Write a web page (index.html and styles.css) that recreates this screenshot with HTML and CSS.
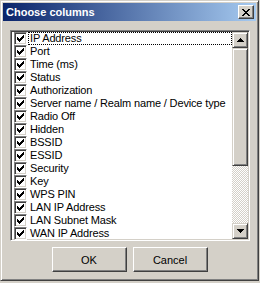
FILE: index.html
```html
<!DOCTYPE html>
<html lang="en">
<head>
  <meta charset="UTF-8" />
  <title>Choose columns</title>
  <link rel="stylesheet" href="styles.css">
</head>
<body>

  <div class="window">
    <div class="titlebar">
      <span class="title">Choose columns</span>
      <button class="close" title="Close">
        <svg width="8" height="7" viewBox="0 0 8 7" shape-rendering="crispEdges">
          <path d="M0 0h2v1h-2zM6 0h2v1h-2zM1 1h2v1h-2zM5 1h2v1h-2zM2 2h4v1h-4zM3 3h2v1h-2zM2 4h4v1h-4zM1 5h2v1h-2zM5 5h2v1h-2zM0 6h2v1h-2zM6 6h2v1h-2z" fill="#000"/>
        </svg>
      </button>
    </div>

    <div class="listbox">
      <ul class="items" id="items"></ul>
      <div class="scrollbar">
        <div class="sb-btn">
          <svg width="7" height="4" viewBox="0 0 7 4" shape-rendering="crispEdges"><path d="M3 0h1v1h-1zM2 1h3v1h-3zM1 2h5v1h-5zM0 3h7v1h-7z" fill="#000"/></svg>
        </div>
        <div class="sb-thumb"></div>
        <div class="sb-track"></div>
        <div class="sb-btn">
          <svg width="7" height="4" viewBox="0 0 7 4" shape-rendering="crispEdges"><path d="M0 0h7v1h-7zM1 1h5v1h-5zM2 2h3v1h-3zM3 3h1v1h-1z" fill="#000"/></svg>
        </div>
      </div>
    </div>

    <div class="buttons">
      <button class="btn">OK</button>
      <button class="btn">Cancel</button>
    </div>
  </div>

  <script>
    const columns = [
      'IP Address', 'Port', 'Time (ms)', 'Status', 'Authorization',
      'Server name / Realm name / Device type', 'Radio Off', 'Hidden',
      'BSSID', 'ESSID', 'Security', 'Key', 'WPS PIN', 'LAN IP Address',
      'LAN Subnet Mask', 'WAN IP Address'
    ];

    const check = '<svg width="7" height="7" viewBox="0 0 7 7" shape-rendering="crispEdges">' +
      '<path d="M6 0h1v3h-1zM5 1h1v3h-1zM0 2h1v3h-1zM4 2h1v3h-1zM1 3h1v3h-1zM3 3h1v3h-1zM2 4h1v3h-1z" fill="#000"/></svg>';

    const list = document.getElementById('items');
    columns.forEach((name, i) => {
      const li = document.createElement('li');
      li.className = 'item';
      li.innerHTML = `<span class="checkbox">${check}</span><span class="label${i === 0 ? ' focus' : ''}">${name}</span>`;
      list.appendChild(li);
    });
  </script>

</body>
</html>
```

FILE: styles.css
```css
body {
  margin: 0;
  background: #d4d0c8;
  font-family: Tahoma, "Liberation Sans", Arial, sans-serif;
  font-size: 11px;
}
.window {
  box-sizing: border-box;
  width: 259px;
  height: 281px;
  padding: 2px;
  border: 1px solid;
  border-color: #d4d0c8 #404040 #404040 #d4d0c8;
  box-shadow: inset 1px 1px #fff, inset -1px -1px #808080;
  background: #d4d0c8;
  display: flex;
  flex-direction: column;
}
.titlebar {
  height: 18px;
  display: flex;
  align-items: center;
  justify-content: space-between;
  background: linear-gradient(to right, #0a246a, #a6caf0);
}
.title {
  padding-left: 3px;
  color: #fff;
  font-weight: bold;
  font-size: 11px;
}
.close {
  width: 16px;
  height: 14px;
  margin-right: 2px;
  padding: 0;
  border: 1px solid;
  border-color: #fff #404040 #404040 #fff;
  box-shadow: inset -1px -1px #808080;
  background: #d4d0c8;
  display: flex;
  align-items: center;
  justify-content: center;
}
.listbox {
  box-sizing: border-box;
  width: 240px;
  height: 211px;
  margin: 9px 0 0 7px;
  border: 1px solid;
  border-color: #808080 #fff #fff #808080;
  box-shadow: inset 1px 1px #404040, inset -1px -1px #d4d0c8;
  padding: 1px;
  background: #fff;
  display: flex;
}
.items {
  flex: 1;
  margin: 0;
  padding: 0;
  list-style: none;
}
.item {
  height: 13px;
  display: flex;
  align-items: center;
  padding-left: 2px;
}
.checkbox {
  box-sizing: border-box;
  width: 13px;
  height: 13px;
  border: 1px solid;
  border-color: #808080 #fff #fff #808080;
  box-shadow: inset 1px 1px #404040, inset -1px -1px #d4d0c8;
  background: #fff;
  display: flex;
  align-items: center;
  justify-content: center;
  flex-shrink: 0;
}
.label {
  margin-left: 1px;
  padding: 0 2px;
  height: 13px;
  line-height: 13px;
  white-space: nowrap;
  letter-spacing: -0.15px;
  color: #000;
}
.label.focus {
  flex: 1;
  box-sizing: border-box;
  outline: 1px dotted #000;
  outline-offset: -1px;
}
.scrollbar {
  width: 16px;
  display: flex;
  flex-direction: column;
}
.sb-btn, .sb-thumb {
  box-sizing: border-box;
  border: 1px solid;
  border-color: #d4d0c8 #404040 #404040 #d4d0c8;
  box-shadow: inset 1px 1px #fff, inset -1px -1px #808080;
  background: #d4d0c8;
}
.sb-btn {
  height: 16px;
  display: flex;
  align-items: center;
  justify-content: center;
}
.sb-thumb {
  height: 118px;
}
.sb-track {
  flex: 1;
  background: repeating-conic-gradient(#d4d0c8 0 25%, #fff 0 50%) 0 0 / 2px 2px;
}
.buttons {
  margin-top: 6px;
  display: flex;
  justify-content: center;
  gap: 6px;
}
.btn {
  box-sizing: border-box;
  width: 75px;
  height: 25px;
  padding: 0;
  border: 1px solid;
  border-color: #fff #404040 #404040 #fff;
  box-shadow: inset -1px -1px #808080;
  background: #d4d0c8;
  font-family: Tahoma, "Liberation Sans", Arial, sans-serif;
  font-size: 11px;
  color: #000;
}
```
